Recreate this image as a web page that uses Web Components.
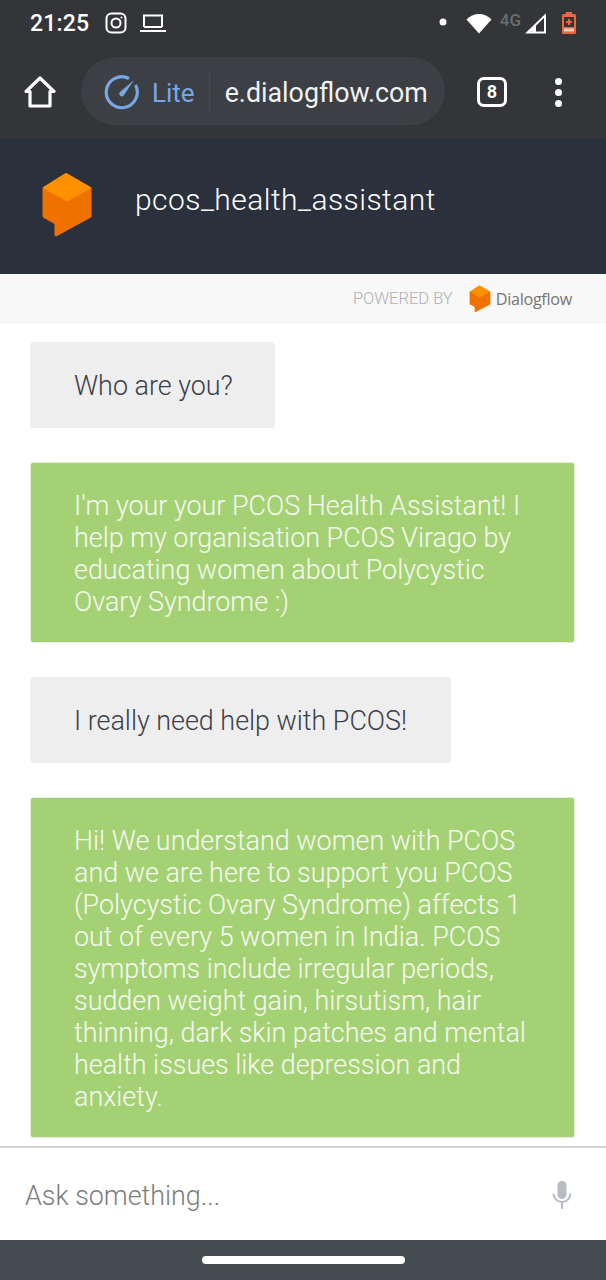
<!DOCTYPE html>
<html lang="en">
<head>
<meta charset="utf-8">
<title>pcos_health_assistant</title>
<style>
  html, body { margin: 0; padding: 0; background: #fff; }
  body { width: 606px; height: 1280px; overflow: hidden; display: flex; flex-direction: column; font-family: Roboto, "Liberation Sans", sans-serif; }
</style>
</head>
<body>
  <phone-chrome></phone-chrome>
  <agent-header title-text="pcos_health_assistant"></agent-header>
  <powered-by></powered-by>
  <chat-log>
    <chat-bubble kind="user" style="padding-right:42px">Who are you?</chat-bubble>
    <chat-bubble kind="bot">I'm your your PCOS Health Assistant! I help my organisation PCOS Virago by educating women about Polycystic Ovary Syndrome :)</chat-bubble>
    <chat-bubble kind="user">I really need help with PCOS!</chat-bubble>
    <chat-bubble kind="bot">Hi! We understand women with PCOS and we are here to support you PCOS (Polycystic Ovary Syndrome) affects 1 out of every 5 women in India. PCOS symptoms include irregular periods, sudden weight gain, hirsutism, hair thinning, dark skin patches and mental health issues like depression and anxiety.</chat-bubble>
  </chat-log>
  <query-input placeholder="Ask something..."></query-input>
  <nav-pill></nav-pill>

<script>
const cube = `
  <svg viewBox="0 0 52 66" width="100%" height="100%" aria-hidden="true">
    <path d="M26 1.5 49.5 15 a2 2 0 0 1 1 1.8 V44 a2 2 0 0 1-1 1.8 L16 64 q-2.500 1.200-2.500-1.500 V52 L2.500 45.800 a2 2 0 0 1-1-1.800 V16.800 a2 2 0 0 1 1-1.800 L24 1.500 q1-.5 2 0z" fill="#ef7100"/>
    <path d="M24 1.500 q1-.5 2 0 L49.500 15 a2 2 0 0 1 1 1 L26 29.500 1.500 16 a2 2 0 0 1 1-1z" fill="#ff9100"/>
  </svg>`;

class PhoneChrome extends HTMLElement {
  constructor() {
    super();
    this.attachShadow({mode: 'open'}).innerHTML = `
      <style>
        :host { display: block; height: 139px; background: #333538; color: #fff; flex: none; }
        .status { height: 46px; display: flex; align-items: center; padding: 0 30px 0 30px; box-sizing: border-box; }
        .time { font: 500 23px/24px Roboto, sans-serif; letter-spacing: .2px; margin: 1px 16px 0 0; }
        .status svg { display: block; flex: none; }
        .spacer { flex: 1; }
        .fourg { font: 500 17px/18px Roboto, sans-serif; color: #6b6d70; margin: 0 4px 6px 8px; }
        .bar { height: 93px; display: flex; align-items: flex-start; padding-left: 24px; box-sizing: border-box; }
        .home { margin-top: 30px; }
        .omni { margin: 11px 0 0 25px; width: 364px; height: 68px; border-radius: 34px; background: #3c3f43; display: flex; align-items: center; padding-left: 23px; box-sizing: border-box; }
        .lite { font: 400 26px/30px Roboto, sans-serif; color: #77a7e6; margin: 4px 0 0 12px; }
        .sep { width: 1px; height: 40px; background: #484b4f; margin: 2px 15px 0 14px; }
        .url { font: 400 26.800px/30px Roboto, sans-serif; color: #f1f2f3; white-space: nowrap; margin-top: 4px; }
        .omni svg { margin-top: 2px; }
        .tabs { margin: 31px 0 0 32px; width: 30px; height: 30px; border: 3px solid #fff; border-radius: 7px; box-sizing: border-box; display: flex; align-items: center; justify-content: center; font: 700 18px/20px Roboto, sans-serif; }
        .more { margin: 32px 0 0 48px; display: flex; flex-direction: column; gap: 4px; }
        .more i { display: block; width: 7px; height: 7px; background: #fff; border-radius: 50%; }
      </style>
      <div class="status">
        <span class="time">21:25</span>
        <svg width="22" height="22" viewBox="0 0 22 22" fill="none" stroke="#fff" stroke-width="2"><rect x="1.500" y="1.500" width="19" height="19" rx="5"/><circle cx="11" cy="11" r="4.500"/><circle cx="16.500" cy="5.500" r="1" fill="#fff" stroke="none"/></svg>
        <svg style="margin-left:13px" width="26" height="20" viewBox="0 0 26 20" fill="none" stroke="#fff"><path stroke-width="2" d="M4 14V2.500h18V14"/><path stroke-width="2" d="M4 14h18"/><path stroke-width="2" d="M0 18h26"/></svg>
        <span class="spacer"></span>
        <svg style="margin:0 19px 2px 0" width="8" height="8" viewBox="0 0 8 8"><circle cx="4" cy="4" r="3.500" fill="#fff"/></svg>
        <svg width="26" height="21" viewBox="0 0 26 21"><path fill="#fff" d="M.5 6.500C4 3 8 1 13 1s9 2 12.500 5.500L13 20.500z"/></svg>
        <span class="fourg">4G</span>
        <svg width="22" height="21" viewBox="0 0 22 21" fill="none" stroke="#fff" stroke-width="2"><path d="M20 2.500V19.500H2.500z"/><path d="M4 18.500 11 12v7z" fill="#fff" stroke="none"/></svg>
        <svg style="margin-left:15px" width="14" height="22" viewBox="0 0 14 22"><path fill="#e8693f" d="M4 0h6v2h2.500a1.500 1.500 0 0 1 1.500 1.500v17a1.500 1.500 0 0 1-1.500 1.500h-11A1.500 1.500 0 0 1 0 20.500v-17A1.500 1.500 0 0 1 1.500 2H4z"/><rect x="2" y="5" width="10" height="10" fill="#333538"/><rect x="2" y="16.500" width="10" height="3" fill="#f6c9b8"/><path fill="#e8693f" d="M6 7h2v2h2v2H8v2H6v-2H4V9h2z"/></svg>
      </div>
      <div class="bar">
        <svg class="home" width="32" height="32" viewBox="0 0 32 32" fill="none" stroke="#fff" stroke-width="3.200" stroke-linejoin="round" stroke-linecap="round"><path d="M2 15.500 16 2l14 13.500h-4V30H6V15.500z"/></svg>
        <div class="omni">
          <svg width="36" height="36" viewBox="0 0 36 36" fill="none" stroke="#77a7e6"><path stroke-width="3.200" d="M25 4.500A15.500 15.500 0 1 0 31.500 11"/><path fill="#77a7e6" stroke="none" d="M30 6 19.700 21.500a2.600 2.600 0 0 1-4-3.300z"/></svg>
          <span class="lite">Lite</span>
          <span class="sep"></span>
          <span class="url">e.dialogflow.com</span>
        </div>
        <div class="tabs">8</div>
        <div class="more"><i></i><i></i><i></i></div>
      </div>`;
  }
}

class AgentHeader extends HTMLElement {
  constructor() {
    super();
    this.attachShadow({mode: 'open'}).innerHTML = `
      <style>
        :host { display: flex; flex: none; height: 135px; background: #2b303d; box-sizing: border-box; padding: 0 0 8px 41px; align-items: flex-start; }
        .logo { width: 52px; height: 66px; margin-top: 33px; flex: none; }
        .title { font: 300 30px/36px Roboto, sans-serif; color: #fff; margin: 43px 0 0 42px; letter-spacing: .45px; }
      </style>
      <div class="logo">${cube}</div>
      <div class="title"></div>`;
  }
  connectedCallback() {
    this.shadowRoot.querySelector('.title').textContent = this.getAttribute('title-text');
  }
}

class PoweredBy extends HTMLElement {
  constructor() {
    super();
    this.attachShadow({mode: 'open'}).innerHTML = `
      <style>
        :host { display: flex; flex: none; height: 50px; background: #f8f8f8; align-items: center; justify-content: flex-end; padding-right: 34px; box-sizing: border-box; }
        .label { font: 300 16.500px/20px Roboto, sans-serif; color: #b0b0b0; margin-right: 16px; }
        .logo { width: 22px; height: 28px; margin-right: 5px; }
        .name { font: 500 16.200px/20px "Open Sans", Roboto, sans-serif; color: #757575; letter-spacing: -.3px; }
      </style>
      <span class="label">POWERED BY</span>
      <span class="logo">${cube}</span>
      <span class="name">Dialogflow</span>`;
  }
}

class ChatLog extends HTMLElement {
  constructor() {
    super();
    this.attachShadow({mode: 'open'}).innerHTML = `
      <style>
        :host { display: flex; flex-direction: column; align-items: flex-start; flex: 1; min-height: 0; overflow: hidden; gap: 34px; padding: 18px 31px 0 30px; background: #fff; }
      </style>
      <slot></slot>`;
  }
}

class ChatBubble extends HTMLElement {
  constructor() {
    super();
    this.attachShadow({mode: 'open'}).innerHTML = `
      <style>
        :host { display: block; flex: none; box-sizing: border-box; border-radius: 3px; padding: 28px 44px 26px; font: 300 26.900px/32px Roboto, sans-serif; background: #eeeeee; color: #3b3f4a; }
        :host([kind="bot"]) { width: 545px; padding: 27px 43px 24px; background: #a5d175; color: #f6faf0; border: 1px solid #e3efd6; }
      </style>
      <slot></slot>`;
  }
}

class QueryInput extends HTMLElement {
  constructor() {
    super();
    this.attachShadow({mode: 'open'}).innerHTML = `
      <style>
        :host { display: flex; flex: none; height: 94px; box-sizing: border-box; border-top: 2px solid #d4d4d4; background: #fff; align-items: center; padding: 3px 34px 0 25px; }
        .text { flex: 1; font: 300 26.900px/32px Roboto, sans-serif; color: #7c7c7c; }
        svg { display: block; margin-top: -2px; }
      </style>
      <span class="text"></span>
      <svg width="20" height="28" viewBox="0 0 20 28" fill="none"><rect x="5.500" y="0" width="9" height="18" rx="4.500" fill="#b9bcc7"/><path d="M1.500 12.500a8.500 8.500 0 0 0 17 0" stroke="#b9bcc7" stroke-width="2"/><path d="M10 21v7" stroke="#b9bcc7" stroke-width="2"/></svg>`;
  }
  connectedCallback() {
    this.shadowRoot.querySelector('.text').textContent = this.getAttribute('placeholder');
  }
}

class NavPill extends HTMLElement {
  constructor() {
    super();
    this.attachShadow({mode: 'open'}).innerHTML = `
      <style>
        :host { display: flex; flex: none; height: 40px; background: #454c50; justify-content: center; padding-top: 16px; box-sizing: border-box; }
        i { display: block; width: 203px; height: 8px; border-radius: 4px; background: #fff; margin-left: 1px; }
      </style>
      <i></i>`;
  }
}

customElements.define('phone-chrome', PhoneChrome);
customElements.define('agent-header', AgentHeader);
customElements.define('powered-by', PoweredBy);
customElements.define('chat-log', ChatLog);
customElements.define('chat-bubble', ChatBubble);
customElements.define('query-input', QueryInput);
customElements.define('nav-pill', NavPill);
</script>
</body>
</html>
